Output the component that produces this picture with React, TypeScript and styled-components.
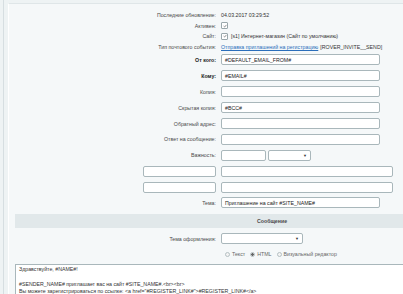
import React from 'react';
import styled, { createGlobalStyle } from 'styled-components';

const GlobalStyle = createGlobalStyle`
  html, body {
    margin: 0;
    padding: 0;
    overflow: hidden;
    background: #eef3f4;
    font-family: "Liberation Sans", Arial, sans-serif;
    font-size: 5.25px;
    color: #3c3c3c;
  }
`;

const Shell = styled.div`
  margin-left: 3px;
  border-left: 1px solid #d6dee1;
  padding-left: 4px;
  padding-top: 3px;
  height: 294px;
  box-sizing: border-box;
  overflow: hidden;
`;

const Panel = styled.div`
  background: #f5f8f9;
  border-top: 1px solid #dfe6e8;
  border-left: 1px solid #ffffff;
  padding: 6px 0 0 6px;
  height: 100%;
  box-sizing: border-box;
  overflow: hidden;
`;

const Form = styled.div`
  width: 514px;
  display: flex;
  flex-direction: column;
`;

const Row = styled.div<{ $h: number }>`
  display: grid;
  grid-template-columns: 206px 1fr;
  align-items: center;
  height: ${p => p.$h}px;
`;

const Label = styled.div<{ $bold?: boolean }>`
  text-align: right;
  padding-right: 5px;
  font-weight: ${p => (p.$bold ? 700 : 400)};
  color: ${p => (p.$bold ? '#222' : '#4a4a4a')};
  white-space: nowrap;
`;

const LabelCell = styled.div`
  display: flex;
  justify-content: flex-end;
  padding-right: 5px;
`;

const Field = styled.div`
  display: flex;
  align-items: center;
  gap: 2px;
  white-space: nowrap;
  color: #333;
`;

const Input = styled.div<{ $w: number }>`
  width: ${p => p.$w}px;
  height: 11px;
  box-sizing: border-box;
  background: #fff;
  border: 1px solid #a9b7bb;
  border-radius: 2px;
  padding-left: 3px;
  display: flex;
  align-items: center;
  color: #222;
`;

const Select = styled(Input)`
  justify-content: flex-end;
  padding-right: 3px;
  font-size: 4px;
  color: #333;
`;

const Check = styled.span`
  width: 5px;
  height: 5px;
  border: 1px solid #9aa7ab;
  border-radius: 1px;
  background: #fff;
  display: inline-flex;
  align-items: center;
  justify-content: center;
  margin-right: 1px;
`;

const Link = styled.span`
  color: #2a6ebb;
  text-decoration: underline;
`;

const Band = styled.div`
  margin-top: 3px;
  height: 14px;
  background: #e1e8ea;
  display: flex;
  align-items: center;
  justify-content: center;
  font-weight: 700;
  color: #4a4a4a;
`;

const Radios = styled.div`
  display: flex;
  align-items: center;
  gap: 5px;
  padding-left: 4px;
  color: #666;
`;

const RadioItem = styled.span`
  display: inline-flex;
  align-items: center;
  gap: 2px;
`;

const Dot = styled.span<{ $on?: boolean }>`
  width: 5px;
  height: 5px;
  border-radius: 50%;
  box-sizing: border-box;
  border: 1px solid #b5c0c3;
  background: ${p => (p.$on ? 'radial-gradient(circle, #666 0 1.3px, #fff 1.5px)' : '#f3f3f3')};
`;

const TextArea = styled.div`
  margin-top: 5px;
  border: 1px solid #a9b7bb;
  background: #fff;
  padding: 1px 3px;
  line-height: 7.5px;
  color: #333;
  white-space: pre;
  height: 40px;
`;

const CheckMark = () => (
  <svg width="4" height="4" viewBox="0 0 10 10">
    <path d="M1.5 5.2 L4 7.6 L8.6 2.2" fill="none" stroke="#555" strokeWidth="1.6" />
  </svg>
);

const inputRows: { label: string; bold?: boolean; value?: string }[] = [
  { label: 'От кого:', bold: true, value: '#DEFAULT_EMAIL_FROM#' },
  { label: 'Кому:', bold: true, value: '#EMAIL#' },
  { label: 'Копия:' },
  { label: 'Скрытая копия:', value: '#BCC#' },
  { label: 'Обратный адрес:' },
  { label: 'Ответ на сообщение:' },
];

const App = () => (
  <>
    <GlobalStyle />
    <Shell>
      <Panel>
        <Form>
          <Row $h={10.5}>
            <Label>Последние обновление:</Label>
            <Field>04.03.2017 03:29:52</Field>
          </Row>
          <Row $h={10.5}>
            <Label>Активен:</Label>
            <Field><Check><CheckMark /></Check></Field>
          </Row>
          <Row $h={10.5}>
            <Label>Сайт:</Label>
            <Field><Check><CheckMark /></Check>[s1] Интернет-магазин (Сайт по умолчанию)</Field>
          </Row>
          <Row $h={10.5}>
            <Label>Тип почтового события:</Label>
            <Field><Link>Отправка приглашений на регистрацию</Link> [ROVER_INVITE__SEND]</Field>
          </Row>
          {inputRows.map(r => (
            <Row $h={15.9} key={r.label}>
              <Label $bold={r.bold}>{r.label}</Label>
              <Field><Input $w={159}>{r.value}</Input></Field>
            </Row>
          ))}
          <Row $h={15.9}>
            <Label>Важность:</Label>
            <Field>
              <Input $w={45} />
              <Select $w={43}>▼</Select>
            </Field>
          </Row>
          <Row $h={15.9}>
            <LabelCell><Input $w={73} /></LabelCell>
            <Field><Input $w={172} /></Field>
          </Row>
          <Row $h={15.9}>
            <LabelCell><Input $w={73} /></LabelCell>
            <Field><Input $w={172} /></Field>
          </Row>
          <Row $h={15.9}>
            <Label>Тема:</Label>
            <Field><Input $w={159}>Приглашение на сайт #SITE_NAME#</Input></Field>
          </Row>
          <Band>Сообщение</Band>
          <Row $h={22}>
            <Label>Тема оформления:</Label>
            <Field><Select $w={82}>▼</Select></Field>
          </Row>
          <Row $h={9}>
            <div />
            <Radios>
              <RadioItem><Dot />Текст</RadioItem>
              <RadioItem><Dot $on />HTML</RadioItem>
              <RadioItem><Dot />Визуальный редактор</RadioItem>
            </Radios>
          </Row>
          <TextArea>
            {'Здравствуйте, #NAME#!\n\n#SENDER_NAME# приглашает вас на сайт #SITE_NAME#.<br><br>\nВы можете зарегистрироваться по ссылке: <a href="#REGISTER_LINK#">#REGISTER_LINK#</a>'}
          </TextArea>
        </Form>
      </Panel>
    </Shell>
  </>
);

export default App;
